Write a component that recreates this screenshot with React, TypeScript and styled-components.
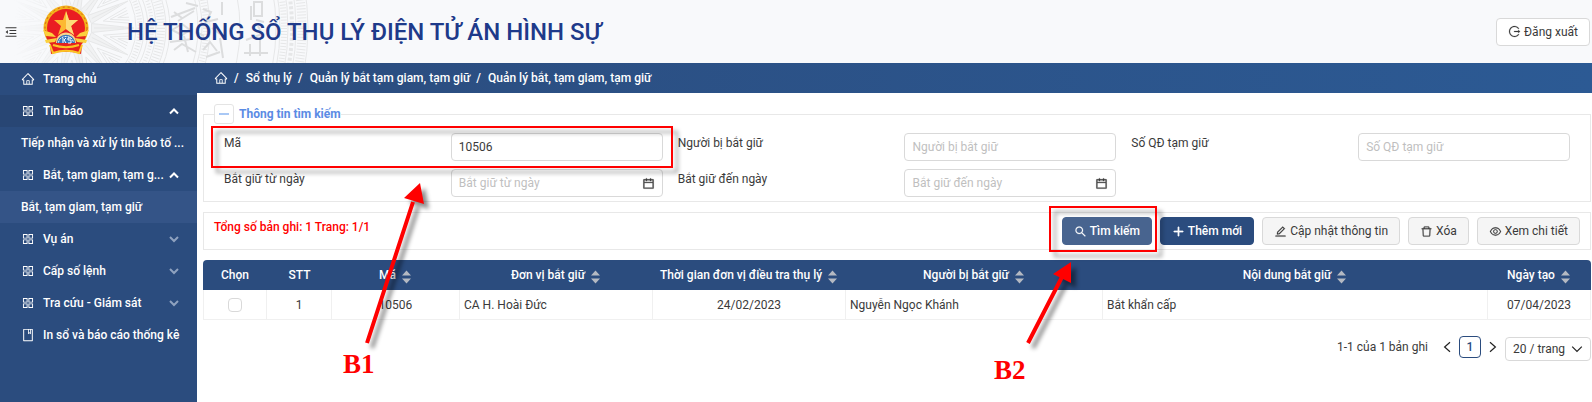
import React from "react";
import styled, { createGlobalStyle, css } from "styled-components";
import {
  AiOutlineAppstore,
  AiOutlineBook,
  AiOutlineCalendar,
  AiOutlineDelete,
  AiOutlineEdit,
  AiOutlineEye,
  AiOutlineHome,
  AiOutlineLogout,
  AiOutlineMenuFold,
  AiOutlinePlus,
  AiOutlineSearch,
} from "react-icons/ai";

const navy = "#2b4c7e";

const GlobalStyle = createGlobalStyle`
  *, *::before, *::after { box-sizing: border-box; }
  body {
    margin: 0;
    background: #fff;
    color: #3a3a3a;
    font: 12px/20px Roboto, "Noto Sans", sans-serif;
  }
  button, input, select { font: inherit; color: inherit; }
  svg { flex: none; display: block; }
`;

const Page = styled.div`
  position: relative;
  min-height: 100vh;
  display: flex;
  flex-direction: column;
  overflow: hidden;
`;

const Header = styled.header`
  position: relative;
  display: flex;
  align-items: center;
  height: 63px;
  padding: 0 2px 0 4px;
  background: #f8f9fb;
  overflow: hidden;
`;

const Pattern = styled.svg`
  position: absolute;
  left: 0;
  top: 0;
`;

const FoldButton = styled.button`
  position: relative;
  display: flex;
  padding: 0;
  border: 0;
  background: none;
  font-size: 14px;
`;

const Emblem = styled.svg`
  position: relative;
  margin-left: 24px;
  margin-top: -4px;
`;

const Title = styled.h1`
  position: relative;
  flex: 1;
  margin: 0 0 0 37px;
  color: #1e3a8a;
  font-size: 24px;
  line-height: 32px;
  font-weight: 500;
`;

const Button = styled.button<{ $kind?: "primary" | "hover" | "plain" }>`
  position: relative;
  display: flex;
  align-items: center;
  gap: 3px;
  height: 28px;
  padding: 0 11px;
  border: 1px solid #d9d9d9;
  border-radius: 4px;
  background: #f5f5f5;
  white-space: nowrap;
  svg { font-size: 13px; stroke-width: 16px; }
  ${(p) => p.$kind === "plain" && css`background: #fff;`}
  ${(p) => (p.$kind === "primary" || p.$kind === "hover") && css`
    border-color: ${p.$kind === "hover" ? "#48648f" : navy};
    background: ${p.$kind === "hover" ? "#48648f" : navy};
    color: #fff;
    font-weight: 500;
  `}
  ${(p) => p.$kind === "primary" && css`svg { stroke-width: 60px; }`}
`;

const Body = styled.div`
  flex: 1;
  display: flex;
  background: ${navy};
`;

const Sidebar = styled.nav`
  flex: none;
  width: 197px;
`;

const NavItem = styled.a<{ $tone?: "dark" | "light" }>`
  display: flex;
  align-items: center;
  gap: 8px;
  height: 32px;
  padding: 0 18px 0 21px;
  background: ${(p) => (p.$tone === "dark" ? "#284674" : p.$tone === "light" ? "#345487" : "transparent")};
  color: #fff;
  font-weight: 500;
  text-decoration: none;
  svg { font-size: 14px; }
`;

const NavText = styled.span`
  flex: 1;
  min-width: 0;
  white-space: nowrap;
`;

const Main = styled.main`
  flex: 1;
  min-width: 0;
  background: #fff;
`;

const Breadcrumb = styled.nav`
  display: flex;
  align-items: center;
  height: 30px;
  padding: 0 17px;
  background: linear-gradient(90deg, ${navy}, #2c5a94);
  color: #fff;
  font-weight: 500;
  a { color: inherit; text-decoration: none; }
  svg { font-size: 14px; }
`;

const Slash = styled.span`
  margin: 0 7px 0 6px;
  &::before { content: "/"; }
`;

const Content = styled.div`
  padding: 11px 1px 0 6px;
`;

const Fieldset = styled.fieldset`
  margin: 0;
  padding: 0 5px 4px 20px;
  border: 1px solid #e8e8e8;
  min-width: 0;
`;

const Legend = styled.legend`
  display: flex;
  align-items: center;
  gap: 5px;
  height: 20px;
  margin-left: -10px;
  padding: 0;
  color: #5b8be4;
  font-weight: 700;
`;

const CollapseButton = styled.button`
  display: grid;
  place-items: center;
  width: 20px;
  height: 20px;
  padding: 0;
  border: 1px solid #e4e4e4;
  border-radius: 3px;
  background: #fff;
  &::before {
    content: "";
    width: 10px;
    height: 2px;
    background: #a9c8f5;
  }
`;

const FieldGrid = styled.div`
  display: grid;
  grid-template-columns: repeat(3, 1fr);
  row-gap: 8px;
  padding-top: 9px;
`;

const Field = styled.label`
  display: grid;
  grid-template-columns: 1fr 1fr;
  padding: 0;
`;

const InputBox = styled.span`
  display: flex;
  align-items: center;
  height: 28px;
  margin-right: 15px;
  padding: 0 7px;
  border: 1px solid #d9d9d9;
  border-radius: 4px;
  svg { font-size: 13px; stroke-width: 30px; }
`;

const Input = styled.input`
  flex: 1;
  min-width: 0;
  height: 20px;
  padding: 0;
  border: 0;
  outline: 0;
  background: none;
  &::placeholder { color: #bfbfbf; opacity: 1; }
`;

const Toolbar = styled.section`
  display: flex;
  gap: 8px;
  margin-top: 10px;
  padding: 4px 10px;
  border: 1px solid #e8e8e8;
`;

const Summary = styled.strong`
  flex: 1;
  color: #f00;
  font-weight: 500;
`;

const Table = styled.table`
  width: 100%;
  margin-top: 10px;
  table-layout: fixed;
  border-collapse: separate;
  border-spacing: 0;
`;

const Th = styled.th`
  height: 30px;
  padding: 0;
  background: ${navy};
  color: #fff;
  font-weight: 500;
  &:first-child { border-top-left-radius: 4px; }
  &:last-child { border-top-right-radius: 4px; }
`;

const Sort = styled.span`
  display: flex;
  align-items: center;
  justify-content: center;
  gap: 6px;
  padding-right: 2px;
  svg { margin-top: 3px; }
`;

const Td = styled.td<{ $center?: boolean }>`
  height: 30px;
  padding: 0 4px;
  border-right: 1px solid #f0f0f0;
  border-bottom: 1px solid #f0f0f0;
  text-align: ${(p) => (p.$center ? "center" : "left")};
  &:first-child { border-left: 1px solid #f0f0f0; }
`;

const Checkbox = styled.input`
  appearance: none;
  display: block;
  width: 14px;
  height: 14px;
  margin: 0 auto;
  border: 1px solid #d9d9d9;
  border-radius: 4px;
  background: #fff;
`;

const Pagination = styled.div`
  display: flex;
  align-items: flex-start;
  justify-content: flex-end;
  margin-top: 16px;
  line-height: 22px;
`;

const PageArrow = styled.button`
  display: grid;
  place-items: center;
  width: 24px;
  height: 22px;
  padding: 0;
  border: 0;
  background: none;
`;

const PageNumber = styled.button`
  width: 22px;
  height: 22px;
  padding: 0;
  border: 1px solid ${navy};
  border-radius: 4px;
  background: #fff;
  color: ${navy};
  font-weight: 500;
  line-height: 20px;
`;

const Total = styled.span`
  margin-right: 7px;
`;

const SelectBox = styled.span`
  display: grid;
  grid-template-columns: 1fr 19px;
  align-items: center;
  width: 86px;
  height: 24px;
  margin-top: 1px;
  border: 1px solid #d9d9d9;
  border-radius: 4px;
  svg { grid-area: 1 / 2; }
`;

const Select = styled.select`
  grid-area: 1 / 1 / 2 / 3;
  height: 22px;
  padding: 0 0 0 7px;
  border: 0;
  outline: 0;
  appearance: none;
  background: none;
`;

const Annotations = styled.div`
  position: absolute;
  inset: 0;
  pointer-events: none;
`;

const Frame = styled.div<{ $x: number; $y: number; $w: number; $h: number }>`
  position: absolute;
  left: ${(p) => p.$x}px;
  top: ${(p) => p.$y}px;
  width: ${(p) => p.$w}px;
  height: ${(p) => p.$h}px;
  border: 2px solid #f00;
  filter: drop-shadow(5px 5px 2px rgba(0, 0, 0, 0.4));
`;

const Arrows = styled.svg`
  position: absolute;
  left: 0;
  top: 0;
  filter: drop-shadow(5px 5px 2px rgba(0, 0, 0, 0.45));
`;

const Step = styled.span<{ $x: number; $y: number }>`
  position: absolute;
  left: ${(p) => p.$x}px;
  top: ${(p) => p.$y}px;
  color: #f00;
  font: bold 27px/30px "Liberation Serif", serif;
`;

const Chevron = ({ dir, size = 10, color = "#fff", weight = 2 }: { dir: "up" | "down" | "left" | "right"; size?: number; color?: string; weight?: number }) => {
  const d = { up: "M1 7.5 5 3.5 9 7.5", down: "M1 3 5 7 9 3", left: "M7.5 1 3 5 7.5 9", right: "M2.5 1 7 5 2.5 9" }[dir];
  return (
    <svg width={size} height={size} viewBox="0 0 10 10" fill="none" stroke={color} strokeWidth={weight} aria-hidden="true">
      <path d={d} />
    </svg>
  );
};

const SortIcon = () => (
  <svg width="9" height="14" viewBox="0 0 9 14" fill="#b4b9c2" aria-hidden="true">
    <path d="M4.500 .5 9 5.500H0zM4.500 13.500 9 8.500H0z" />
  </svg>
);

const polar = (r: number, deg: number) => {
  const a = (deg * Math.PI) / 180;
  return `${(72 + r * Math.cos(a)).toFixed(1)} ${(28 + r * Math.sin(a)).toFixed(1)}`;
};

const range = (n: number) => Array.from({ length: n }, (_, i) => i);

/* Bronze-drum motif: a rayed star inside bands of rings, hatching and figures. */
const DrumPattern = () => (
  <Pattern width="320" height="63" fill="none" stroke="#e6e7e8" aria-hidden="true">
    <defs>
      <linearGradient id="fade"><stop offset="0.04" stopColor="#000" /><stop offset="0.25" stopColor="#fff" /></linearGradient>
      <mask id="drum"><rect width="320" height="63" fill="url(#fade)" stroke="none" /></mask>
    </defs>
    <g mask="url(#drum)">
      {range(14).map((i) => {
        const a = (i * 360) / 14;
        return (
          <g key={i}>
            <path fill="#f1f2f3" d={`M${polar(20, a - 13)}L${polar(62, a)}L${polar(20, a + 13)}z`} />
            <path d={`M${polar(22, a)}L${polar(52, a)}`} />
            <path d={`M${polar(58, a + 5)}L${polar(32, a + 13)}L${polar(58, a + 21)}M${polar(58, a + 8)}L${polar(39, a + 13)}L${polar(58, a + 18)}M${polar(58, a + 11)}L${polar(47, a + 13)}L${polar(58, a + 15)}`} />
          </g>
        );
      })}
      {[64, 72, 76, 84, 94, 98, 126, 130, 138, 168, 204, 208, 216, 224, 236].map((r) => (
        <circle key={r} cx="72" cy="28" r={r} />
      ))}
      {[[68, 5], [80, 4], [89, 8], [134, 6], [212, 6], [230, 9]].map(([r, w]) => (
        <circle key={r} cx="72" cy="28" r={r} strokeWidth={w} strokeDasharray="1 2" />
      ))}
      <circle cx="72" cy="28" r="220" strokeWidth="4" strokeDasharray="3 2" />
      <g strokeWidth="2" stroke="#dcddde">
        <path d="M171 17l24-9M174 12l8 6M178 21l16-10M172 30l10-6 8 6-8 5zM170 42l22-3M174 50l8-6 14 8M184 36l4 16M186 3l12 3" />
        <path d="M203 9l8 3-5 10 12-3M203 50l7-8 7 9M206 57l14-5M222 2v13M220 38l3 20M212 28l8 6M196 32l8 4" />
        <path d="M254 2h8v14h-8zM256 20l8 2M251 6v14M244 53h24M250 44v12M260 38v18M246 40l16-6M258 26l4 8" />
      </g>
    </g>
  </Pattern>
);

const Coat = () => (
  <Emblem width="48" height="50" viewBox="0 0 48 50" role="img" aria-label="Quốc huy">
    <circle cx="24" cy="23" r="22.500" fill="#f3b51b" />
    <circle cx="24" cy="23" r="21" fill="none" stroke="#d8571b" strokeWidth="1" strokeDasharray="2 3" />
    <circle cx="24" cy="23" r="19" fill="#ea1d22" />
    <path d="M3 25c1 13 8 20 21 21 13-1 20-8 21-21l-5 4-4 5H12l-4-5z" fill="#e4231f" />
    <path d="M24 6l3 9h9l-7 6 3 9-8-6-8 6 3-9-7-6h9z" fill="#fcb932" />
    <path d="M24 6v18l8 6-3-9 7-6h-9z" fill="#fddb78" />
    <path d="M1 25l9 3 4 4-10-1zM47 25l-9 3-4 4 10-1zM3 35l12-2-2 4-9 1zM45 35l-12-2 2 4 9 1z" fill="#fbd13c" />
    <path d="M14 38c0-14 20-14 20 0z" fill="#fbd58b" />
    <path d="M15 38c1-11 17-11 18 0z" fill="#3575bd" />
    <path d="M16.500 37.500c1-8 14-8 15 0" fill="none" stroke="#fff" strokeDasharray="2 1" />
    <path d="M21 33v5m3-5-2 2 2 3m5-5h-3v2h3v3h-3" fill="none" stroke="#fff" />
    <path d="M10 38c9 3 19 3 28 0l2 3-1 8c-10-3-20-3-30 0l-1-8z" fill="#e8221f" />
    <path d="M8 40l3 8c9-3 17-3 26 0l3-8M11 40c9 3 17 3 26 0" fill="none" stroke="#fbc526" strokeWidth="2" />
  </Emblem>
);

const menu: { text: string; icon?: "home" | "app" | "book"; arrow?: "up" | "down"; tone?: "dark" | "light" }[] = [
  { text: "Trang chủ", icon: "home" },
  { text: "Tin báo", icon: "app", arrow: "up", tone: "dark" },
  { text: "Tiếp nhận và xử lý tin báo tố ..." },
  { text: "Bắt, tạm giam, tạm g...", icon: "app", arrow: "up" },
  { text: "Bắt, tạm giam, tạm giữ", tone: "light" },
  { text: "Vụ án", icon: "app", arrow: "down" },
  { text: "Cấp số lệnh", icon: "app", arrow: "down" },
  { text: "Tra cứu - Giám sát", icon: "app", arrow: "down" },
  { text: "In sổ và báo cáo thống kê", icon: "book" },
];

const icons = { home: AiOutlineHome, app: AiOutlineAppstore, book: AiOutlineBook };

const fields = [
  { label: "Mã", value: "10506" },
  { label: "Người bị bắt giữ" },
  { label: "Số QĐ tạm giữ" },
  { label: "Bắt giữ từ ngày", date: true },
  { label: "Bắt giữ đến ngày", date: true },
];

const columns = [
  { title: "Chọn", width: 64 },
  { title: "STT", width: 65 },
  { title: "Mã", width: 128, sort: true },
  { title: "Đơn vị bắt giữ", width: 193, sort: true },
  { title: "Thời gian đơn vị điều tra thụ lý", width: 193, sort: true },
  { title: "Người bị bắt giữ", width: 257, sort: true },
  { title: "Nội dung bắt giữ", width: 385, sort: true },
  { title: "Ngày tạo", width: 103, sort: true },
];

export default function App() {
  return (
    <Page>
      <GlobalStyle />
      <Header>
        <DrumPattern />
        <FoldButton aria-label="Thu gọn"><AiOutlineMenuFold /></FoldButton>
        <Coat />
        <Title>HỆ THỐNG SỔ THỤ LÝ ĐIỆN TỬ ÁN HÌNH SỰ</Title>
        <Button $kind="plain"><AiOutlineLogout />Đăng xuất</Button>
      </Header>
      <Body>
        <Sidebar>
          {menu.map((item, i) => {
            const Icon = item.icon && icons[item.icon];
            return (
              <NavItem key={i} href="#" $tone={item.tone}>
                {Icon && <Icon />}
                <NavText>{item.text}</NavText>
                {item.arrow && <Chevron dir={item.arrow} color={item.arrow === "up" ? "#fff" : "#8fa2bf"} />}
              </NavItem>
            );
          })}
        </Sidebar>
        <Main>
          <Breadcrumb>
            <a href="#" aria-label="Trang chủ"><AiOutlineHome /></a>
            <Slash />
            <a href="#">Sổ thụ lý</a>
            <Slash />
            <a href="#">Quản lý bắt tạm giam, tạm giữ</a>
            <Slash />
            <span>Quản lý bắt, tạm giam, tạm giữ</span>
          </Breadcrumb>
          <Content>
            <Fieldset>
              <Legend><CollapseButton type="button" aria-label="Thu gọn" />Thông tin tìm kiếm</Legend>
              <FieldGrid>
                {fields.map((f) => (
                  <Field key={f.label}>
                    {f.label}
                    <InputBox>
                      <Input placeholder={f.label} defaultValue={f.value} />
                      {f.date && <AiOutlineCalendar />}
                    </InputBox>
                  </Field>
                ))}
              </FieldGrid>
            </Fieldset>
            <Toolbar>
              <Summary>Tổng số bản ghi: 1 Trang: 1/1</Summary>
              <Button $kind="hover"><AiOutlineSearch />Tìm kiếm</Button>
              <Button $kind="primary"><AiOutlinePlus />Thêm mới</Button>
              <Button><AiOutlineEdit />Cập nhật thông tin</Button>
              <Button><AiOutlineDelete />Xóa</Button>
              <Button><AiOutlineEye />Xem chi tiết</Button>
            </Toolbar>
            <Table>
              <colgroup>
                {columns.map((c) => <col key={c.title} style={{ width: c.width }} />)}
              </colgroup>
              <thead>
                <tr>
                  {columns.map((c) => (
                    <Th key={c.title}>{c.sort ? <Sort>{c.title}<SortIcon /></Sort> : c.title}</Th>
                  ))}
                </tr>
              </thead>
              <tbody>
                <tr>
                  <Td $center><Checkbox type="checkbox" aria-label="Chọn" /></Td>
                  <Td $center>1</Td>
                  <Td $center>10506</Td>
                  <Td>CA H. Hoài Đức</Td>
                  <Td $center>24/02/2023</Td>
                  <Td>Nguyễn Ngọc Khánh</Td>
                  <Td>Bắt khẩn cấp</Td>
                  <Td $center>07/04/2023</Td>
                </tr>
              </tbody>
            </Table>
            <Pagination>
              <Total>1-1 của 1 bản ghi</Total>
              <PageArrow aria-label="Trang trước"><Chevron dir="left" color="#222" size={12} weight={1} /></PageArrow>
              <PageNumber>1</PageNumber>
              <PageArrow aria-label="Trang sau"><Chevron dir="right" color="#222" size={12} weight={1} /></PageArrow>
              <SelectBox>
                <Select aria-label="Số bản ghi mỗi trang"><option>20 / trang</option></Select>
                <Chevron dir="down" color="#222" size={12} weight={1} />
              </SelectBox>
            </Pagination>
          </Content>
        </Main>
      </Body>
      <Annotations>
        <Frame $x={211} $y={126} $w={462} $h={42} />
        <Frame $x={1049} $y={206} $w={108} $h={46} />
        <Arrows width="1100" height="402" fill="#f00" stroke="#f00" aria-hidden="true">
          <path d="M367 343 413 202M1028 343 1063 275" strokeWidth="4" />
          <path d="M420 183 404 198 424 204zM1071 262 1053 274 1071 283z" stroke="none" />
        </Arrows>
        <Step $x={343} $y={349}>B1</Step>
        <Step $x={994} $y={355}>B2</Step>
      </Annotations>
    </Page>
  );
}
